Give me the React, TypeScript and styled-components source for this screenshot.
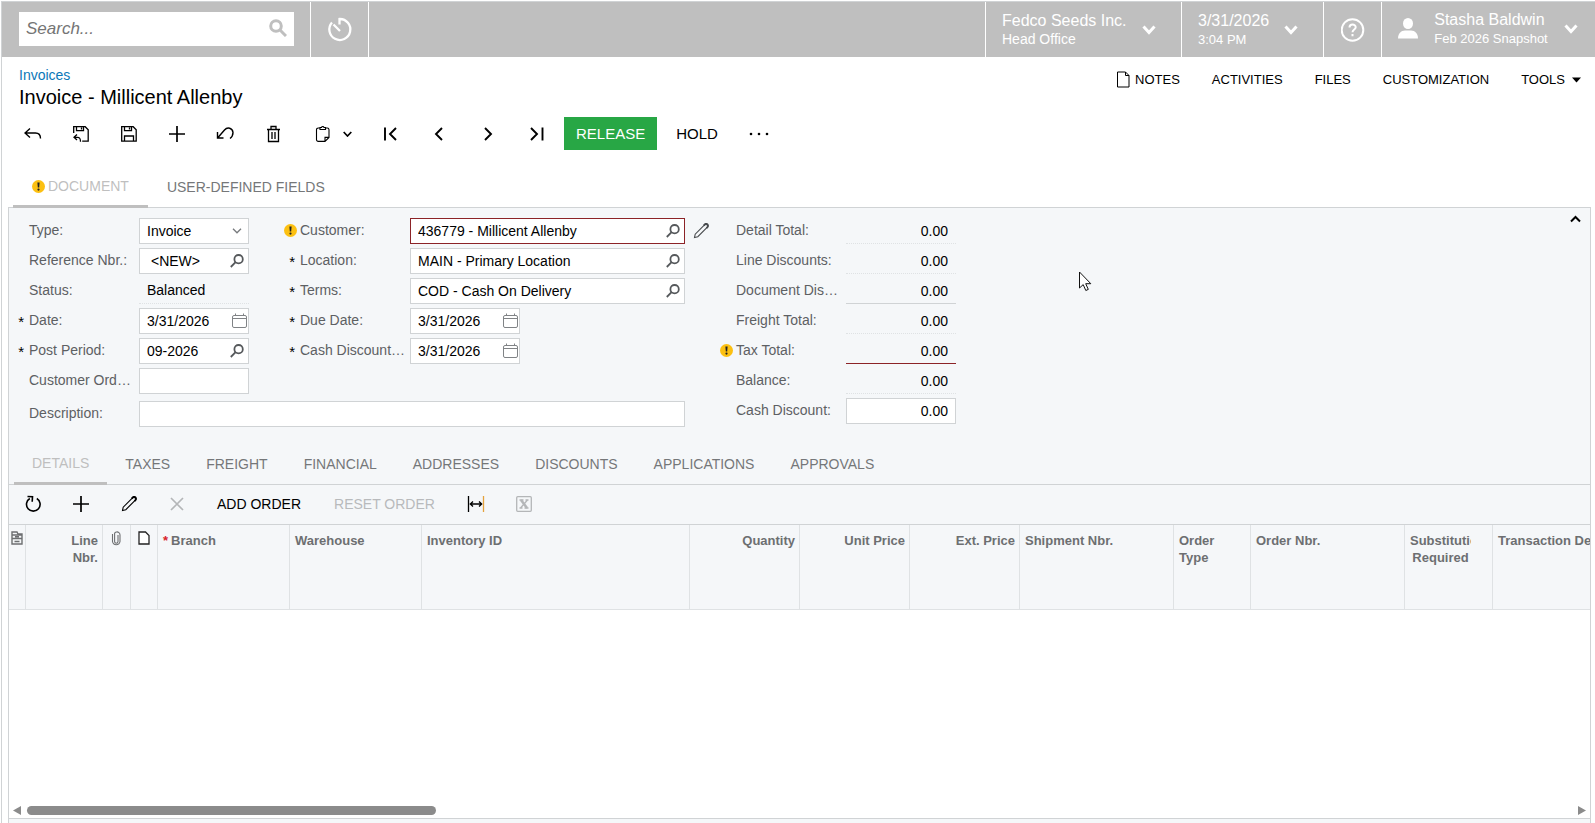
import React from 'react';
import styled, { createGlobalStyle, css } from 'styled-components';

const GlobalStyle = createGlobalStyle`
  *, *::before, *::after { box-sizing: border-box; }
  body {
    margin: 0;
    background: #fff;
    color: #000;
    font: 14px/16px "Liberation Sans", Arial, sans-serif;
  }
  button, input, select { font: inherit; color: inherit; margin: 0; }
  button { background: none; border: 0; padding: 0; cursor: pointer; }
  svg { display: block; flex: none; }
`;

const LINE = '#d0d3d5';
const CELL_LINE = '#dfe2e4';
const PANEL = '#f5f7f9';
const ACCENT = '#bfbfbf';

/* ---------- page frame ---------- */

const Page = styled.div`
  display: flex;
  flex-direction: column;
  height: 100vh;
  margin-left: 1px;
  padding-top: 1px;
`;

const Frame = styled.div`
  flex: 1;
  min-height: 0;
  display: flex;
  flex-direction: column;
  border: 1px solid ${LINE};
  border-width: 1px 0 0 1px;
`;

/* ---------- top bar ---------- */

const TopBar = styled.header`
  display: flex;
  height: 55px;
  flex: none;
  background: ${ACCENT};
  color: #fff;
`;

const SearchArea = styled.div`
  width: 308px;
  padding: 10px 0 0 17px;
`;

const SearchBox = styled.label`
  display: flex;
  align-items: center;
  width: 275px;
  height: 34px;
  padding: 0 7px 2px;
  background: #fff;
`;

const SearchInput = styled.input`
  flex: 1;
  min-width: 0;
  padding: 2px 0 0;
  border: 0;
  outline: 0;
  color: #333;
  font-size: 17px;
  line-height: 20px;
  font-style: italic;
  &::placeholder { color: #757575; opacity: 1; }
`;

const TopButton = styled.button<{ $width: number; $end?: boolean }>`
  display: flex;
  align-items: center;
  justify-content: center;
  width: ${(p) => p.$width}px;
  border-left: 1px solid #fff;
  border-right: ${(p) => (p.$end ? '1px solid #fff' : '0')};
`;

const Spacer = styled.div`
  flex: 1;
`;

const TopMenu = styled.button<{ $width: number }>`
  display: flex;
  align-items: center;
  justify-content: space-between;
  width: ${(p) => p.$width}px;
  padding: 0 25px 0 16px;
  border-left: 1px solid #fff;
  text-align: left;
`;

const UserMenu = styled(TopMenu)`
  padding: 0 17px 2px 16px;
`;

const TwoLines = styled.span`
  display: flex;
  flex-direction: column;
  font-size: 16px;
  line-height: 19px;
  white-space: nowrap;
`;

const SubLine = styled.span<{ $large?: boolean }>`
  font-size: ${(p) => (p.$large ? 14 : 13)}px;
`;

/* ---------- title and screen menu ---------- */

const TitleBar = styled.div`
  display: flex;
  justify-content: space-between;
  align-items: flex-start;
  padding: 10px 14px 0 17px;
`;

const Crumb = styled.a`
  color: #0b78b8;
  text-decoration: none;
`;

const Title = styled.h1`
  margin: 0;
  font-size: 20px;
  line-height: 28px;
  font-weight: 400;
`;

const ScreenMenu = styled.nav`
  display: flex;
  gap: 32px;
  padding-top: 4px;
`;

const MenuItem = styled.button<{ $gap?: number }>`
  display: flex;
  align-items: center;
  gap: ${(p) => p.$gap ?? 0}px;
  font-size: 13px;
  line-height: 16px;
`;

/* ---------- record toolbar ---------- */

const RecordBar = styled.div`
  display: flex;
  align-items: center;
  height: 34px;
  margin-top: 6px;
  padding-left: 7px;
`;

const ToolButton = styled.button<{ $width?: number }>`
  display: flex;
  align-items: center;
  justify-content: center;
  width: ${(p) => p.$width ?? 48}px;
  height: 34px;
  color: #000;
  &:disabled { color: #b4b6b8; cursor: default; }
`;

const ClipboardButton = styled(ToolButton)`
  gap: 12px;
  padding-left: 4px;
`;

const ReleaseButton = styled.button`
  align-self: flex-start;
  height: 33px;
  margin: 0 3px;
  padding: 0 12px;
  background: #28a745;
  color: #fff;
  font-size: 15px;
`;

const TextAction = styled.button<{ $size?: number }>`
  padding: 0 17px 0 16px;
  font-size: ${(p) => p.$size ?? 14}px;
  white-space: nowrap;
  &:disabled { color: #b8babc; cursor: default; }
`;

/* ---------- tabs ---------- */

const Tabs = styled.div<{ $tall?: boolean }>`
  display: flex;
  align-items: flex-end;
  height: ${(p) => (p.$tall ? 56 : 58)}px;
  padding-left: ${(p) => (p.$tall ? 11 : 5)}px;
  border-bottom: ${(p) => (p.$tall ? '0' : `1px solid ${LINE}`)};
`;

const Tab = styled.button<{ $active?: boolean; $wide?: boolean }>`
  display: flex;
  align-items: center;
  gap: 3px;
  height: 33px;
  padding: 0 ${(p) => (p.$wide ? 19 : 18)}px 7px;
  color: #757779;
  white-space: nowrap;
  ${(p) =>
    p.$active &&
    css`
      position: relative;
      height: 34px;
      margin-bottom: -1px;
      border-bottom: 3px solid ${ACCENT};
      color: ${ACCENT};
    `}
`;

/* ---------- panel ---------- */

const Panel = styled.main`
  flex: 1;
  min-height: 0;
  display: flex;
  flex-direction: column;
  margin: 0 4px 0 6px;
  border: 1px solid ${LINE};
  border-bottom: 0;
  background: ${PANEL};
`;

const Form = styled.form`
  position: relative;
  display: flex;
  align-items: flex-start;
  padding-top: 10px;
`;

const LeftPart = styled.div`
  display: flex;
  flex-direction: column;
  gap: 7px;
`;

const Columns = styled.div`
  display: flex;
  gap: 31px;
`;

const Column = styled.div`
  display: flex;
  flex-direction: column;
  gap: 4px;
`;

const Row = styled.div<{ $field?: number }>`
  display: grid;
  grid-template-columns: 20px 110px ${(p) => p.$field ?? 110}px;
  align-items: center;
  height: 26px;
`;

const WideRow = styled(Row)`
  grid-template-columns: 20px 110px 275px 31px;
`;

const Marker = styled.span`
  display: flex;
  justify-content: flex-end;
  padding: 0 3px 2px 0;
`;

const Required = styled.span`
  padding: 4px 2px 0 0;
  font-size: 15px;
`;

const FieldLabel = styled.label`
  padding-bottom: 2px;
  color: #5d6063;
  white-space: nowrap;
`;

const Box = styled.span<{ $short?: boolean; $error?: boolean }>`
  display: flex;
  align-items: center;
  width: ${(p) => (p.$short ? '110px' : '100%')};
  height: 26px;
  padding: 0 ${(p) => (p.$short ? 0 : 4)}px 0 7px;
  border: 1px solid ${(p) => (p.$error ? '#8c2327' : LINE)};
  background: #fff;
`;

const BoxInput = styled.input<{ $indent?: boolean }>`
  flex: 1;
  min-width: 0;
  padding: 0 0 0 ${(p) => (p.$indent ? 4 : 0)}px;
  border: 0;
  outline: 0;
  background: none;
`;

const BoxSelect = styled.select`
  flex: 1;
  min-width: 0;
  padding: 0;
  border: 0;
  outline: 0;
  background: none;
  appearance: none;
`;

const IconButton = styled.button`
  display: flex;
  justify-content: center;
  color: #484b4e;
`;

const Plain = styled.output`
  height: 26px;
  padding: 4px 0 0 8px;
  border-bottom: 1px dotted ${CELL_LINE};
`;

const Total = styled.input<{ $tone?: 'solid' | 'error' | 'box' }>`
  width: 110px;
  height: 26px;
  padding: 0 8px 0 0;
  border: 0 solid ${LINE};
  border-bottom: 1px dotted ${CELL_LINE};
  outline: 0;
  background: none;
  text-align: right;
  ${(p) => p.$tone === 'solid' && css`border-bottom: 1px solid ${LINE};`}
  ${(p) => p.$tone === 'error' && css`border-bottom: 1px solid #8c2327;`}
  ${(p) =>
    p.$tone === 'box' &&
    css`
      padding-right: 7px;
      border: 1px solid ${LINE};
      background: #fff;
    `}
`;

const Collapse = styled.button`
  margin: -3px 8px 0 auto;
`;

const Pointer = styled.span`
  position: absolute;
  left: 1070px;
  top: 63px;
`;

/* ---------- grid ---------- */

const GridBar = styled.div`
  display: flex;
  align-items: center;
  height: 39px;
  flex: none;
  padding-bottom: 1px;
`;

const GridArea = styled.div`
  flex: 1;
  min-height: 0;
  overflow: hidden;
  border-top: 1px solid ${LINE};
  background: #fff;
`;

const Table = styled.table`
  width: 1680px;
  table-layout: fixed;
  border-collapse: separate;
  border-spacing: 0;
  background: ${PANEL};
`;

const Th = styled.th<{ $align?: 'right' | 'center'; $icon?: boolean }>`
  height: 85px;
  padding: ${(p) => (p.$icon ? '6px 0 0' : '7px 4px 0 5px')};
  border: 1px solid ${CELL_LINE};
  border-width: 0 1px 1px 0;
  color: #6d6f71;
  font-size: 13px;
  line-height: 17px;
  text-align: ${(p) => p.$align ?? 'left'};
  vertical-align: top;
  svg { margin: 0 auto; }
`;

const Clip = styled.span`
  display: block;
  width: 61px;
  overflow: hidden;
`;

const Star = styled.span`
  margin-right: 3px;
  color: #d8232a;
`;

const ScrollBar = styled.div`
  display: flex;
  align-items: center;
  gap: 6px;
  height: 18px;
  flex: none;
  padding: 3px 4px 0;
  background: #fff;
  color: #8b8b8b;
`;

const Track = styled.div`
  flex: 1;
`;

const Thumb = styled.div`
  width: 26.5%;
  height: 9px;
  border-radius: 5px;
  background: #8b8b8b;
`;

const Footer = styled.footer`
  height: 5px;
  flex: none;
  border-top: 1px solid ${LINE};
`;

/* ---------- icons ---------- */

type IconProps = { w?: number; h?: number; sw?: number; children: React.ReactNode };

const Icon = ({ w = 18, h = 18, sw = 1, children }: IconProps) => (
  <svg width={w} height={h} viewBox={`0 0 ${w} ${h}`} fill="none" stroke="currentColor" strokeWidth={sw} aria-hidden="true">
    {children}
  </svg>
);

const Chevron = () => (
  <Icon w={14} h={10} sw={3}><path d="M1.5 1.5 7 7.500l5.500-6" /></Icon>
);

const Warning = () => (
  <svg width="13" height="13" viewBox="0 0 13 13" aria-hidden="true">
    <circle cx="6.500" cy="6.500" r="6.500" fill="#fcc011" />
    <path d="M5.400 2.500h2.200L7.200 7.600H5.800z" fill="#222" />
    <circle cx="6.500" cy="9.600" r="1.100" fill="#222" />
  </svg>
);

const PlusIcon = () => <Icon sw={1.7}><path d="M9 1v16M1 9h16" /></Icon>;

const PencilIcon = () => (
  <svg width="16" height="16" viewBox="0 0 16 16" fill="none" stroke="currentColor" strokeWidth="1.100" aria-hidden="true">
    <path d="M1.500 14.500 2.200 11.200 11.500 1.800a1.600 1.600 0 0 1 2.600 2.500L4.800 13.700z" />
    <path d="M10.800 2.500l1-1a1.800 1.800 0 0 1 2.700 2.700l-1 1" strokeWidth="1.800" />
  </svg>
);

const Lookup = () => (
  <Icon w={14} h={14} sw={1.8}>
    <g stroke="#55585b"><circle cx="8.600" cy="5.200" r="4.200" /><path d="M5.600 8.200 .8 13" /></g>
  </Icon>
);

const Calendar = () => (
  <Icon w={16} h={16}>
    <g stroke="#808386"><rect x=".5" y="2.500" width="14" height="12" rx="1.500" /><path d="M.5 5.500h14M3.500 .5v2M11.500 .5v2" /></g>
  </Icon>
);

const Note = () => (
  <Icon w={14} h={17}><path d="M1.500 1h8l3.500 3.500v11.500h-11.500zM9.500 1v3.500h3.500" /></Icon>
);

/* ---------- form parts ---------- */

type FieldProps = {
  id: string;
  label: string;
  value?: string;
  mark?: 'required' | 'warning';
  icon?: 'lookup' | 'calendar';
  indent?: boolean;
  wide?: boolean;
  width?: number;
  error?: boolean;
  after?: React.ReactNode;
};

const Mark = ({ kind }: { kind?: 'required' | 'warning' }) => (
  <Marker>
    {kind === 'required' && <Required>*</Required>}
    {kind === 'warning' && <Warning />}
  </Marker>
);

const Field = ({ id, label, value = '', mark, icon, indent, wide, width, error, after }: FieldProps) => {
  const Line = wide ? WideRow : Row;
  return (
    <Line $field={width}>
      <Mark kind={mark} />
      <FieldLabel htmlFor={id}>{label}</FieldLabel>
      <Box $short={icon === 'calendar'} $error={error}>
        <BoxInput id={id} defaultValue={value} $indent={indent} />
        {icon === 'lookup' && <IconButton type="button" aria-label="Look up"><Lookup /></IconButton>}
        {icon === 'calendar' && <IconButton type="button" aria-label="Pick a date"><Calendar /></IconButton>}
      </Box>
      {after}
    </Line>
  );
};

const totals: { id: string; label: string; tone?: 'solid' | 'error' | 'box' }[] = [
  { id: 'detail-total', label: 'Detail Total:' },
  { id: 'line-discounts', label: 'Line Discounts:' },
  { id: 'document-discounts', label: 'Document Dis…', tone: 'solid' },
  { id: 'freight-total', label: 'Freight Total:' },
  { id: 'tax-total', label: 'Tax Total:', tone: 'error' },
  { id: 'balance', label: 'Balance:' },
  { id: 'cash-discount', label: 'Cash Discount:', tone: 'box' },
];

const detailTabs = ['DETAILS', 'TAXES', 'FREIGHT', 'FINANCIAL', 'ADDRESSES', 'DISCOUNTS', 'APPLICATIONS', 'APPROVALS'];

const columnWidths = [17, 77, 28, 27, 132, 132, 268, 110, 110, 110, 154, 77, 154, 88];

export default function App() {
  return (
    <Page>
      <GlobalStyle />
      <Frame>
        <TopBar>
          <SearchArea>
            <SearchBox>
              <SearchInput placeholder="Search..." aria-label="Search" />
              <Icon sw={3}>
                <g stroke={ACCENT}><circle cx="7" cy="7" r="5.300" /><path d="m11 11 6 6" /></g>
              </Icon>
            </SearchBox>
          </SearchArea>
          <TopButton $width={59} $end aria-label="Recently visited">
            <Icon w={26} h={26} sw={2.3}>
              <path d="M5 5.500A10.500 10.500 0 1 0 12.500 2v5.500M6.500 7.500l6.500 6.500" />
            </Icon>
          </TopButton>
          <Spacer />
          <TopMenu $width={196}>
            <TwoLines>Fedco Seeds Inc.<SubLine $large>Head Office</SubLine></TwoLines>
            <Chevron />
          </TopMenu>
          <TopMenu $width={142}>
            <TwoLines>3/31/2026<SubLine>3:04 PM</SubLine></TwoLines>
            <Chevron />
          </TopMenu>
          <TopButton $width={58} aria-label="Help">
            <Icon w={24} h={24} sw={2}>
              <circle cx="11.500" cy="12" r="10.800" />
              <path d="M8.500 9.500c0-4 6.200-3.800 6.200-.3 0 2.300-3.200 2.300-3.200 5M11.500 16v2.200" />
            </Icon>
          </TopButton>
          <UserMenu $width={214}>
            <svg width="20" height="21" viewBox="0 0 20 21" fill="#fff" aria-hidden="true">
              <ellipse cx="10" cy="5.500" rx="5" ry="5.500" />
              <path d="M0 20.500c0-5 3-8 7-8h6c4 0 7 3 7 8z" />
            </svg>
            <TwoLines>Stasha Baldwin<SubLine>Feb 2026 Snapshot</SubLine></TwoLines>
            <Chevron />
          </UserMenu>
        </TopBar>

        <TitleBar>
          <div>
            <Crumb href="#invoices">Invoices</Crumb>
            <Title>Invoice - Millicent Allenby</Title>
          </div>
          <ScreenMenu>
            <MenuItem $gap={5}><Note />NOTES</MenuItem>
            <MenuItem>ACTIVITIES</MenuItem>
            <MenuItem>FILES</MenuItem>
            <MenuItem>CUSTOMIZATION</MenuItem>
            <MenuItem $gap={7}>
              TOOLS
              <svg width="9" height="6" viewBox="0 0 9 6" aria-hidden="true"><path d="M0 .5h9L4.500 5.500z" /></svg>
            </MenuItem>
          </ScreenMenu>
        </TitleBar>

        <RecordBar>
          <ToolButton aria-label="Back">
            <Icon sw={1.4}><path d="M6 3.500 1 8 6 12.500M1 8H11.500c3.500 0 5 1.500 5 5.500" /></Icon>
          </ToolButton>
          <ToolButton aria-label="Save and close">
            <Icon sw={1.3}><path d="M1.700 8V1.700h11.500l3 3v11.500h-6M4.500 1.700v4h7v-4M9.500 2.500v2M5 9.500 2 12.300l3 2.800M2 12.300h3.500c2.500 0 3 1.700 3 4.500" /></Icon>
          </ToolButton>
          <ToolButton aria-label="Save">
            <Icon sw={1.3}><path d="M1.700 1.700h11.500l3 3v11.500H1.700zM4.500 1.700v4h7v-4M9.500 2.500v2M4.500 16v-5h9v5" /></Icon>
          </ToolButton>
          <ToolButton aria-label="Add new record"><PlusIcon /></ToolButton>
          <ToolButton aria-label="Undo">
            <Icon sw={1.4}><path d="M1.500 7v6H7.500M2 12.500l6.500-7.500c3-3.500 8-2 8.500 2.500 0 2.500-1 4.500-3 6" /></Icon>
          </ToolButton>
          <ToolButton aria-label="Delete">
            <Icon sw={1.3}><path d="M3 4.500h13M7 4.500V1.500h5v3M4.500 4.500v12h10v-12M8 7v7M11 7v7" /></Icon>
          </ToolButton>
          <ClipboardButton $width={68} aria-label="Clipboard">
            <Icon w={16} h={18} sw={1.1}><path d="M5 3H3.200A1.700 1.700 0 0 0 1.500 4.700v10A1.700 1.700 0 0 0 3.200 16.400H10l4-4V4.700A1.700 1.700 0 0 0 12.300 3H10.500M5 4.500V2.500h1.500a1.300 1.300 0 0 1 2.500 0h1.500v2zM10 16.400v-4h4" /></Icon>
            <Icon w={9} h={6} sw={1.7}><path d="m.7 1 3.800 4 3.800-4" /></Icon>
          </ClipboardButton>
          <ToolButton $width={49} aria-label="First record">
            <Icon sw={1.9}><path d="M4 2.500v13M15 3 9 9l6 6" /></Icon>
          </ToolButton>
          <ToolButton $width={49} aria-label="Previous record">
            <Icon sw={1.9}><path d="M12 3 6 9l6 6" /></Icon>
          </ToolButton>
          <ToolButton $width={49} aria-label="Next record">
            <Icon sw={1.9}><path d="m6 3 6 6-6 6" /></Icon>
          </ToolButton>
          <ToolButton $width={49} aria-label="Last record">
            <Icon sw={1.9}><path d="M14.500 2.500v13M3 3l6 6-6 6" /></Icon>
          </ToolButton>
          <ReleaseButton>RELEASE</ReleaseButton>
          <TextAction $size={15}>HOLD</TextAction>
          <ToolButton aria-label="More actions">
            <svg width="20" height="4" viewBox="0 0 20 4" aria-hidden="true">
              <circle cx="2" cy="2" r="1.300" /><circle cx="10" cy="2" r="1.300" /><circle cx="18" cy="2" r="1.300" />
            </svg>
          </ToolButton>
        </RecordBar>

        <Tabs $tall role="tablist">
          <Tab $active $wide role="tab" aria-selected="true"><Warning />DOCUMENT</Tab>
          <Tab $wide role="tab" aria-selected="false">USER-DEFINED FIELDS</Tab>
        </Tabs>

        <Panel>
          <Form>
            <LeftPart>
              <Columns>
                <Column>
                  <Row>
                    <Mark />
                    <FieldLabel htmlFor="type">Type:</FieldLabel>
                    <Box>
                      <BoxSelect id="type" defaultValue="Invoice"><option>Invoice</option></BoxSelect>
                      <Icon w={12} h={6} sw={1.3}><g stroke="#777a7d"><path d="m1 .8 4 4 4-4" /></g></Icon>
                    </Box>
                  </Row>
                  <Field id="ref" label="Reference Nbr.:" value="<NEW>" icon="lookup" indent />
                  <Row>
                    <Mark />
                    <FieldLabel htmlFor="status">Status:</FieldLabel>
                    <Plain id="status">Balanced</Plain>
                  </Row>
                  <Field id="date" label="Date:" value="3/31/2026" mark="required" icon="calendar" />
                  <Field id="period" label="Post Period:" value="09-2026" mark="required" icon="lookup" />
                  <Field id="custord" label="Customer Ord…" />
                </Column>
                <Column>
                  <Field
                    id="customer"
                    label="Customer:"
                    value="436779 - Millicent Allenby"
                    mark="warning"
                    icon="lookup"
                    wide
                    error
                    after={<IconButton type="button" aria-label="Edit customer"><PencilIcon /></IconButton>}
                  />
                  <Field id="location" label="Location:" value="MAIN - Primary Location" mark="required" icon="lookup" wide />
                  <Field id="terms" label="Terms:" value="COD - Cash On Delivery" mark="required" icon="lookup" wide />
                  <Field id="due" label="Due Date:" value="3/31/2026" mark="required" icon="calendar" wide />
                  <Field id="discdate" label="Cash Discount…" value="3/31/2026" mark="required" icon="calendar" wide />
                </Column>
              </Columns>
              <Field id="description" label="Description:" width={546} />
            </LeftPart>
            <Column>
              {totals.map((t) => (
                <Row key={t.id}>
                  <Mark kind={t.tone === 'error' ? 'warning' : undefined} />
                  <FieldLabel htmlFor={t.id}>{t.label}</FieldLabel>
                  <Total id={t.id} $tone={t.tone} defaultValue="0.00" readOnly={t.tone !== 'box'} />
                </Row>
              ))}
            </Column>
            <Collapse type="button" aria-label="Collapse">
              <Icon w={13} h={8} sw={2}><path d="M2 6.500 6.500 2 11 6.500" /></Icon>
            </Collapse>
            <Pointer>
              <svg width="14" height="21" viewBox="0 0 14 21" fill="#fff" stroke="#111" aria-hidden="true">
                <path d="M.5 1v16l3.700-3.400 2.600 5.900 2.500-1.100-2.600-5.700h5.100z" />
              </svg>
            </Pointer>
          </Form>

          <Tabs role="tablist">
            {detailTabs.map((name, i) => (
              <Tab key={name} $active={i === 0} role="tab" aria-selected={i === 0}>{name}</Tab>
            ))}
          </Tabs>

          <GridBar>
            <ToolButton aria-label="Refresh">
              <Icon sw={1.6}><path d="M5.800 3.500A6.800 6.800 0 1 0 12.800 3.500M3.500 1.500l5 .3-.3 5" /></Icon>
            </ToolButton>
            <ToolButton aria-label="Add row"><PlusIcon /></ToolButton>
            <ToolButton aria-label="Edit row"><PencilIcon /></ToolButton>
            <ToolButton disabled aria-label="Delete row">
              <Icon w={14} h={14} sw={1.7}><path d="m1 1 12 12M13 1 1 13" /></Icon>
            </ToolButton>
            <TextAction>ADD ORDER</TextAction>
            <TextAction disabled>RESET ORDER</TextAction>
            <ToolButton aria-label="Fit to screen">
              <Icon sw={1.3}>
                <path d="M1.500 1v16M3 9h12M6 6.500 3.300 9 6 11.500M12 6.500 14.700 9 12 11.500" />
                <path d="M16.500 1v16" stroke="#e5a23c" />
              </Icon>
            </ToolButton>
            <ToolButton disabled aria-label="Export to Excel">
              <Icon w={16} h={16} sw={1.3}>
                <rect x=".7" y=".7" width="14.600" height="14.600" rx="1" />
                <path d="m5 4 6 8" strokeWidth="2.500" /><path d="M11.500 4 4.500 12M3.500 4h4M8.500 12h4M9.500 4h3M3.500 12h3" />
              </Icon>
            </ToolButton>
          </GridBar>

          <GridArea>
            <Table>
              <colgroup>
                {columnWidths.map((w, i) => <col key={i} width={w} />)}
                <col />
              </colgroup>
              <thead>
                <tr>
                  <Th $icon aria-label="Row settings">
                    <Icon w={12} h={14} sw={1.4}><path d="M1 3V1h5l1 2h4v10H1zM1 4h10M1 7.500h10M4 5.800h4M3.500 10.500h5" /></Icon>
                  </Th>
                  <Th $align="right">Line<br />Nbr.</Th>
                  <Th $icon aria-label="Files">
                    <Icon w={12} h={15} sw={1.1}><path d="M7 4v6.500a1.700 1.700 0 0 1-3.400 0V3.500A2 2 0 0 1 5.300 1a3 3 0 0 1 3.700 3v6.500a3.800 3.800 0 0 1-7.500 0V3" /></Icon>
                  </Th>
                  <Th $icon aria-label="Notes">
                    <svg width="12" height="15" viewBox="0 0 12 15" fill="#fff" stroke="#222" strokeWidth="1.300" aria-hidden="true">
                      <path d="M1 1h6.500L11 4.500V13H1z" />
                    </svg>
                  </Th>
                  <Th><Star>*</Star>Branch</Th>
                  <Th>Warehouse</Th>
                  <Th>Inventory ID</Th>
                  <Th $align="right">Quantity</Th>
                  <Th $align="right">Unit Price</Th>
                  <Th $align="right">Ext. Price</Th>
                  <Th>Shipment Nbr.</Th>
                  <Th>Order<br />Type</Th>
                  <Th>Order Nbr.</Th>
                  <Th $align="center"><Clip>Substitution Required</Clip></Th>
                  <Th>Transaction Descr.</Th>
                </tr>
              </thead>
            </Table>
          </GridArea>
          <ScrollBar>
            <svg width="8" height="9" viewBox="0 0 8 9" fill="currentColor" aria-hidden="true"><path d="M8 0v9L0 4.500z" /></svg>
            <Track><Thumb /></Track>
            <svg width="8" height="9" viewBox="0 0 8 9" fill="currentColor" aria-hidden="true"><path d="M0 0v9l8-4.500z" /></svg>
          </ScrollBar>
          <Footer />
        </Panel>
      </Frame>
    </Page>
  );
}
